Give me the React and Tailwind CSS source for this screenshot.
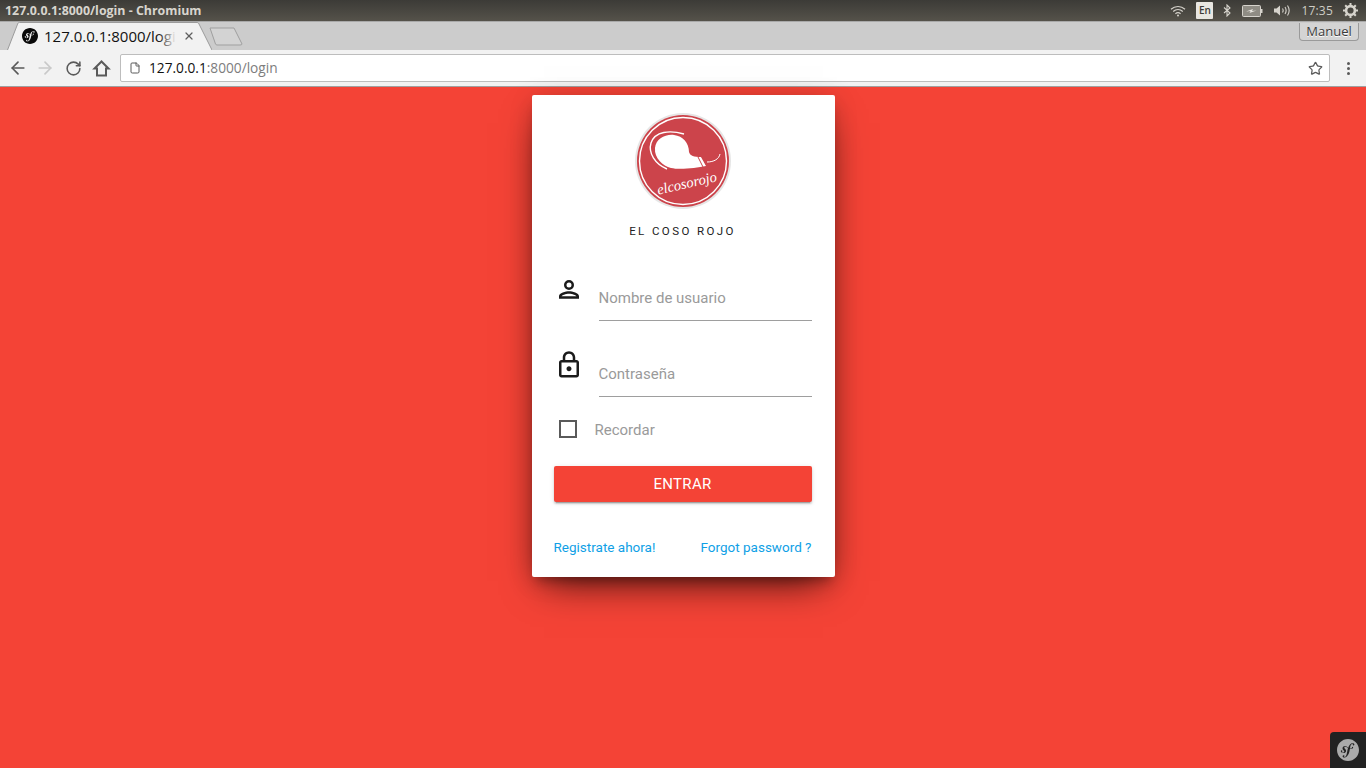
import { ArrowLeft, ArrowRight, RotateCw, Star, File, X } from 'lucide-react';

function SymfonyMark({ size, color }) {
  return (
    <svg width={size} height={size} viewBox="0 0 24 24" fill={color}>
      <path d="M24 12c0 6.628-5.372 12-12 12S0 18.628 0 12 5.372 0 12 0s12 5.372 12 12zm-6.753-7.561c-1.217.043-2.279.714-3.068 1.639-.875 1.017-1.457 2.223-1.877 3.455-.749-.614-1.327-1.409-2.53-1.757-.931-.267-1.908-.157-2.792.503-.418.314-.707.79-.844 1.238-.355 1.153.372 2.181.703 2.55l.705.755c.145.149.493.533.323 1.085-.183.6-.904.987-1.645.76-.331-.101-.806-.347-.699-.693.042-.142.143-.249.198-.366.05-.103.074-.18.089-.226.135-.441-.05-1.014-.524-1.161-.44-.136-.892-.028-1.066.538-.201.652.11 1.836 1.783 2.351 1.959.603 3.616-.464 3.85-1.855.147-.871-.245-1.52-.962-2.347l-.584-.646c-.354-.354-.475-.958-.111-1.418.309-.39.75-.556 1.47-.36 1.052.286 1.52 1.015 2.302 1.604-.323 1.061-.534 2.126-.724 3.08l-.117.712c-.559 2.935-.986 4.547-2.095 5.471-.223.159-.542.396-1.022.413-.252.008-.333-.166-.337-.242-.006-.176.143-.258.242-.337.148-.081.372-.215.357-.645-.016-.507-.436-.947-1.044-.927-.456.015-1.15.444-1.124 1.231.027.812.784 1.42 1.927 1.382.611-.021 1.974-.268 3.316-1.863 1.563-1.829 2-3.926 2.329-5.462l.367-2.028c.204.024.422.041.659.047 1.949.041 2.924-.969 2.939-1.704.01-.445-.292-.883-.715-.873-.303.009-.683.21-.774.626-.09.41.62.78.065 1.14-.394.255-1.1.435-2.094.29l.181-.999c.369-1.893.824-4.222 2.55-4.279.126-.006.587.006.597.309.003.101-.022.127-.141.359-.121.181-.167.335-.161.511.017.481.383.798.913.779.71-.023.914-.714.902-1.069-.029-.834-.908-1.36-2.072-1.322z" />
    </svg>
  );
}

function SystemTray() {
  return (
    <div className="flex items-center text-[#d6d3cc]">
      <svg width="16" height="12" viewBox="0 0 16 12" fill="none" stroke="currentColor" strokeWidth="1.2">
        <path d="M1 4.2c4-3.600 10-3.600 14 0M3.200 6.500c2.800-2.400 6.800-2.400 9.600 0M5.400 8.700c1.500-1.200 3.700-1.200 5.200 0" />
        <circle cx="8" cy="10.600" r="1" fill="currentColor" stroke="none" />
      </svg>
      <span className="ml-[10px] flex h-[17px] w-[17px] items-center justify-center rounded-[1px] bg-[#e8e6e1] font-['Open_Sans',sans-serif] text-[10px] font-semibold text-[#3c3b37]">En</span>
      <svg width="8" height="13" viewBox="0 0 8 13" fill="none" stroke="currentColor" strokeWidth="1.1" className="ml-[10px]">
        <path d="M1 3.500l6 5.500-3 3V1l3 3-6 5" />
      </svg>
      <svg width="21" height="12" viewBox="0 0 21 12" className="ml-[11px]">
        <rect x="0.500" y="0.500" width="18" height="11" rx="1" fill="#8f8c84" stroke="currentColor" />
        <rect x="19" y="4" width="1.500" height="4" fill="currentColor" />
        <path d="M4 6.500l7-2.500-1 2 4.500-.5-7 2.500 1-2z" fill="#e6e4de" />
      </svg>
      <svg width="17" height="13" viewBox="0 0 17 13" fill="none" stroke="currentColor" className="ml-[10px]">
        <path d="M1 4.500h2.500L7 1.500v10l-3.500-3H1z" fill="currentColor" stroke="none" />
        <path d="M9.500 4.500c.8 1.200.8 2.800 0 4M12 3c1.300 2 1.300 5 0 7M14.500 1.500c2 3 2 7 0 10" strokeWidth="1.1" />
      </svg>
      <span className="ml-[11px] font-['Open_Sans',sans-serif] text-[12px] tracking-[0.2px] text-[#cfcdc6]">17:35</span>
      <svg width="15" height="15" viewBox="0 0 15 15" className="ml-[10px] mr-[8px]">
        <circle cx="7.500" cy="7.500" r="4.400" fill="none" stroke="currentColor" strokeWidth="2.600" />
        <path d="M7.500 0v3M7.500 12v3M0 7.500h3M12 7.500h3M2.200 2.200l2 2M10.800 10.800l2 2M12.800 2.200l-2 2M4.200 10.800l-2 2" stroke="currentColor" strokeWidth="2" />
      </svg>
    </div>
  );
}

function TabStrip() {
  return (
    <div className="flex h-[29px] items-end justify-between border-t border-[#a9a9a9] bg-[#cccccc]">
      <div className="flex items-end">
        <div className="relative ml-[7px] flex h-[28px] w-[205px] items-center pl-[15px]">
          <svg width="205" height="28" viewBox="0 0 205 28" className="absolute left-0 top-0">
            <path d="M0.500 28 L11 1 Q11.500 0.500 12.500 0.500 H190 Q191 0.500 191.500 1 L205 28" fill="#f2f2f2" stroke="#9b9b9b" />
          </svg>
          <span className="relative"><SymfonyMark size={16} color="#0a0a0a" /></span>
          <span className="relative ml-[6px] w-[132px] overflow-hidden whitespace-nowrap font-['Open_Sans',sans-serif] text-[15px] text-[#111]">
            127.0.0.1:8000/login
            <span className="absolute bottom-0 right-0 top-0 w-[18px] bg-gradient-to-r from-transparent to-[#f2f2f2]" />
          </span>
          <X size={12} strokeWidth={2.5} className="relative ml-[7px] text-[#5f5f5f]" />
        </div>
        <svg width="34" height="19" viewBox="0 0 34 19" className="-ml-[3px] mb-[4px]">
          <path d="M1 1 H25 L33 17 Q33 18 31 18 H8 Q7 18 6.500 17 Z" fill="#d3d3d3" stroke="#9f9f9f" />
        </svg>
      </div>
      <div className="mb-[9px] mr-[7px] flex h-[18px] w-[60px] items-center justify-center rounded-b-[4px] border border-t-0 border-[#9a9a9a] bg-[#d4d4d4] font-['Open_Sans',sans-serif] text-[13px] text-[#3b3b3b] [text-shadow:0_1px_0_#ffffff]">Manuel</div>
    </div>
  );
}

function Toolbar() {
  return (
    <div className="flex h-[37px] items-center border-b border-[#a0a0a0] bg-[#f2f2f2] pl-[8px]">
      <ArrowLeft size={20} strokeWidth={2} className="text-[#5a5a5a]" />
      <ArrowRight size={20} strokeWidth={2} className="ml-[7px] text-[#c9c9c9]" />
      <RotateCw size={17} strokeWidth={2.2} className="ml-[10px] text-[#5a5a5a]" />
      <svg width="19" height="19" viewBox="0 0 19 19" fill="none" stroke="#5a5a5a" strokeWidth="2" className="ml-[10px]">
        <path d="M9.500 2.500L2.500 9.500H5V16.500H14V9.500H16.500Z" />
      </svg>
      <div className="ml-[9px] flex h-[28px] w-[1210px] items-center rounded-[2px] border border-[#bdbdbd] bg-white pl-[8px] pr-[6px]">
        <File size={12} strokeWidth={2} className="text-[#5a5a5a]" />
        <span className="ml-[8px] font-['Open_Sans',sans-serif] text-[13.7px] text-[#111]">127.0.0.1<span className="text-[#7d7d7d]">:8000/login</span></span>
        <Star size={15} strokeWidth={2} className="ml-auto text-[#5a5a5a]" />
      </div>
      <div className="ml-[17px] flex flex-col gap-[2px]">
        <span className="h-[3px] w-[3px] rounded-full bg-[#5a5a5a]" />
        <span className="h-[3px] w-[3px] rounded-full bg-[#5a5a5a]" />
        <span className="h-[3px] w-[3px] rounded-full bg-[#5a5a5a]" />
      </div>
    </div>
  );
}

function Logo() {
  return (
    <svg width="98" height="98" viewBox="0 0 98 98">
      <circle cx="49" cy="49" r="48" fill="#e6e6e6" />
      <circle cx="49" cy="49" r="46" fill="#cc444b" />
      <circle cx="49" cy="49" r="43.500" fill="none" stroke="#ffffff" strokeWidth="1.4" />
      <path d="M21 36C22 27 31 22 40 23C49 24 55 31 55 40C56 44 60 45 67 45L72 54C62 56 46 58 37 56C29 54 20 46 21 36Z" fill="#ffffff" />
      <path d="M50 22C36 18 21 19 17 31C14 41 21 52 33 57" fill="none" stroke="#ffffff" strokeWidth="1.4" />
      <path d="M64 45L69 55M68 45L73 54" fill="none" stroke="#cc444b" strokeWidth="1" />
      <path d="M73 50C80 50 85 47 86 42" fill="none" stroke="#ffffff" strokeWidth="1" />
      <text x="53" y="76" textAnchor="middle" transform="rotate(-13 53 72)" fill="#ffffff" fontFamily="'Liberation Serif', serif" fontStyle="italic" fontSize="14.5">elcosorojo</text>
    </svg>
  );
}

function Field({ icon, label, className }) {
  return (
    <div className={`flex ${className}`}>
      <div className="flex w-[45px] shrink-0">{icon}</div>
      <div className="flex-1 border-b border-[#9e9e9e] text-[15px] leading-[20px] text-[#9a9a9a]">{label}</div>
    </div>
  );
}

function LoginCard() {
  return (
    <div className="mt-[8px] flex h-[482px] w-[303px] flex-col rounded-[2px] bg-white pl-[22px] pr-[23px] font-['Roboto',sans-serif] shadow-[0_16px_38px_-12px_rgba(0,0,0,0.75),0_4px_25px_0_rgba(0,0,0,0.14),0_8px_10px_-5px_rgba(0,0,0,0.25)]">
      <div className="mt-[17px] flex justify-center"><Logo /></div>
      <p className="mt-[14px] text-center text-[11.5px] leading-[14px] tracking-[2.4px] text-[#222]">EL COSO ROJO</p>

      <Field
        className="mt-[37px] h-[46px] pt-[1px]"
        label={<div className="pt-[12px]">Nombre de usuario</div>}
        icon={
          <svg width="30" height="30" viewBox="0 0 24 24" className="-mt-[1px]">
            <path d="M12 6a2 2 0 1 1 0 4 2 2 0 0 1 0-4m0 9c2.700 0 5.800 1.290 6 2H6c.230-.720 3.310-2 6-2M12 4a4 4 0 1 0 0 8 4 4 0 0 0 0-8zm0 9c-2.670 0-8 1.340-8 4v2h16v-2c0-2.660-5.330-4-8-4z" fill="#1b1b1b" />
          </svg>
        }
      />
      <Field
        className="mt-[29px] h-[47px]"
        label={<div className="pt-[14px]">Contraseña</div>}
        icon={
          <svg width="30" height="30" viewBox="0 0 24 24">
            <path d="M18 8h-1V6c0-2.760-2.240-5-5-5S7 3.240 7 6v2H6c-1.100 0-2 .900-2 2v10c0 1.100.900 2 2 2h12c1.100 0 2-.900 2-2V10c0-1.100-.900-2-2-2zM9 6c0-1.660 1.340-3 3-3s3 1.340 3 3v2H9V6zm9 14H6V10h12v10zm-6-3c1.100 0 2-.900 2-2s-.900-2-2-2-2 .900-2 2 .900 2 2 2z" fill="#1b1b1b" />
          </svg>
        }
      />

      <div className="mt-[23px] flex h-[18px] items-center">
        <span className="ml-[5px] h-[18px] w-[18px] border-2 border-[#5a5a5a]" />
        <span className="ml-[18px] pt-[2px] text-[15px] text-[#9a9a9a]">Recordar</span>
      </div>

      <button className="mt-[28px] h-[36px] rounded-[2px] bg-[#f44336] text-[15px] tracking-[0.3px] text-white shadow-[0_2px_2px_0_rgba(0,0,0,0.14),0_3px_1px_-2px_rgba(0,0,0,0.2),0_1px_5px_0_rgba(0,0,0,0.12)]">ENTRAR</button>

      <div className="mt-[37px] flex justify-between text-[13.5px] leading-[16px] text-[#109fe6]">
        <a>Registrate ahora!</a>
        <a>Forgot password ?</a>
      </div>
    </div>
  );
}

export default function App() {
  return (
    <div className="relative flex h-[768px] w-[1366px] flex-col overflow-hidden bg-[#f44336]">
      <div className="flex h-[21px] items-center justify-between bg-gradient-to-b from-[#3c3b37] to-[#55524a]">
        <span className="pl-[5px] pt-[1px] font-['Open_Sans',sans-serif] text-[12.4px] font-bold text-[#d8d5ce]">127.0.0.1:8000/login - Chromium</span>
        <SystemTray />
      </div>
      <TabStrip />
      <Toolbar />
      <div className="flex flex-1 justify-center">
        <LoginCard />
      </div>
      <div className="absolute bottom-0 right-0 flex h-[36px] w-[36px] items-center justify-center rounded-tl-[4px] bg-[#222222]">
        <SymfonyMark size={22} color="#aaaaaa" />
      </div>
    </div>
  );
}
